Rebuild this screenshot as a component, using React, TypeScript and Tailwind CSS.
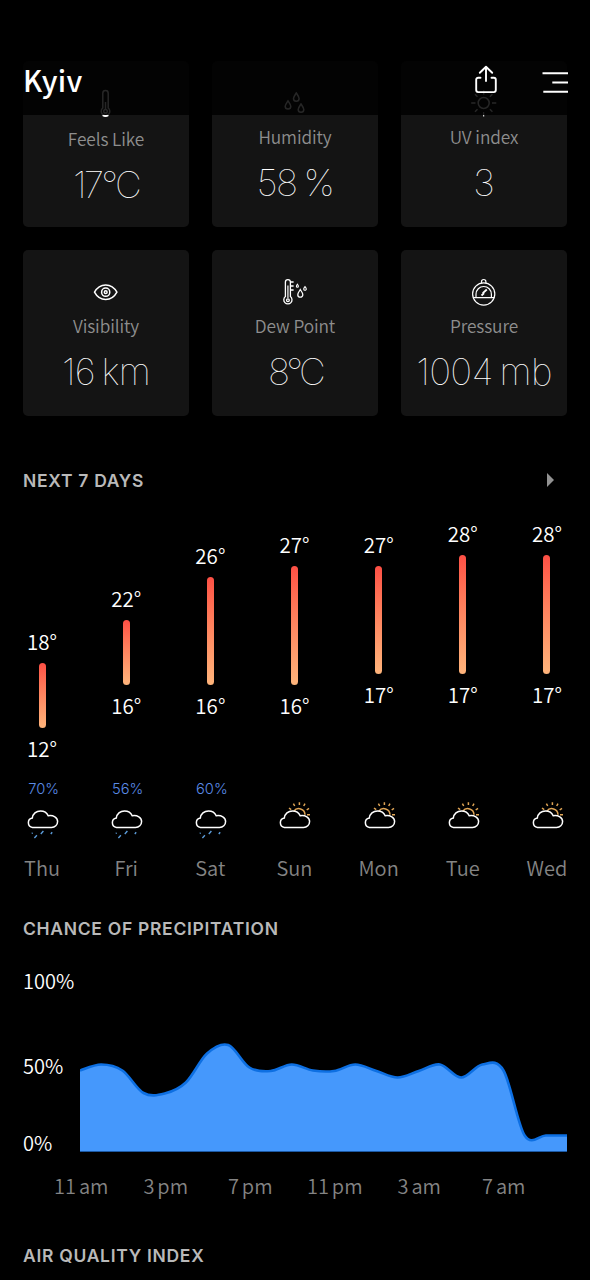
import * as React from "react";

const DEGREE = 10.83;
const MAX_TEMP = 28;

const days = [
  { day: "Thu", high: 18, low: 12, rain: "70%" },
  { day: "Fri", high: 22, low: 16, rain: "56%" },
  { day: "Sat", high: 26, low: 16, rain: "60%" },
  { day: "Sun", high: 27, low: 16 },
  { day: "Mon", high: 27, low: 17 },
  { day: "Tue", high: 28, low: 17 },
  { day: "Wed", high: 28, low: 17 },
];

// height in px above the 0% line, one value per hour
const precipitation = [
  81, 87, 81, 58.5, 58, 69, 98, 106.5, 84, 80.5, 87, 81, 80.5, 87, 80.5, 74, 80.5,
  87, 74, 87, 81, 16, 16, 16,
];

const hours = ["11 am", "3 pm", "7 pm", "11 pm", "3 am", "7 am"];

function ThermometerIcon() {
  return (
    <svg width="28" height="30" viewBox="0 0 28 30" fill="none" stroke="currentColor" strokeWidth="1.5">
      <path d="M10.8 19V4.200a2.700 2.700 0 0 1 5.400 0V19a4.300 4.300 0 1 1-5.400 0z" />
      <path d="M13.500 13v7" />
      <circle cx="13.500" cy="22.300" r="1.800" />
      <path d="M10.800 26.200c1.500 1 3.900 1 5.400 0" strokeWidth="1.800" />
    </svg>
  );
}

function DropsIcon() {
  return (
    <svg width="28" height="28" viewBox="0 0 28 28" fill="none" stroke="currentColor" strokeWidth="1.5">
      <path d="M7 11.800c1.600 2.400 2.800 4 2.800 5.500a2.800 2.800 0 0 1-5.600 0c0-1.500 1.200-3.100 2.800-5.500z" />
      <path d="M15.300 4c1.600 2.400 2.800 4 2.800 5.500a2.800 2.800 0 0 1-5.600 0c0-1.500 1.200-3.100 2.800-5.500z" />
      <path d="M20 15c1.600 2.400 2.800 4 2.800 5.500a2.800 2.800 0 0 1-5.600 0c0-1.500 1.200-3.100 2.800-5.500z" />
    </svg>
  );
}

function SunIcon() {
  return (
    <svg width="28" height="28" viewBox="0 0 28 28" fill="none" stroke="currentColor" strokeWidth="1.5">
      <circle cx="13.700" cy="14" r="5.500" />
      <path d="M13.700 1.500v4M1.200 14h4.300M22 14h4.300M5 5.300l2.500 2.500M19.900 20.200l2.500 2.500M5 22.700l2.500-2.500M19.900 7.800l2.500-2.500" />
      <path d="M13.700 23v4.500" strokeWidth="1" />
    </svg>
  );
}

function EyeIcon() {
  return (
    <svg width="28" height="28" viewBox="0 0 28 28" fill="none" stroke="currentColor" strokeWidth="1.5">
      <path d="M2.500 14.200C5 9.500 9 6.900 13.700 6.900s8.700 2.600 11.200 7.300c-2.500 4.700-6.500 7.300-11.200 7.300S5 18.900 2.500 14.200z" />
      <circle cx="13.700" cy="14.200" r="4.100" />
      <circle cx="13.700" cy="14.200" r="1.400" />
    </svg>
  );
}

function DewPointIcon() {
  return (
    <svg width="28" height="28" viewBox="0 0 28 28" fill="none" stroke="currentColor" strokeWidth="1.300">
      <path d="M4.400 18.600V4.100a2.500 2.500 0 0 1 5 0v14.500a4.100 4.100 0 1 1-5 0z" />
      <path d="M6.900 7.500V20" strokeWidth="1.500" opacity=".8" />
      <circle cx="6.900" cy="22.200" r="1.400" />
      <path d="M9.400 4h3.200M9.400 8h3.200M9.400 12h3.200" />
      <path d="M19.300 11.500c1.500 2.200 2.500 3.700 2.500 5.200a2.500 2.500 0 0 1-5 0c0-1.500 1-3 2.500-5.200z" />
      <path d="M16.400 6.300c.7 1 1 1.500 1 2a1 1 0 0 1-2 0c0-.5.3-1 1-2z" strokeWidth="1.100" />
      <path d="M24 8.600c.9 1.200 1.300 1.800 1.300 2.400a1.300 1.300 0 0 1-2.600 0c0-.6.4-1.200 1.300-2.400z" strokeWidth="1.100" />
    </svg>
  );
}

function PressureIcon() {
  return (
    <svg width="28" height="28" viewBox="0 0 28 28" fill="none" stroke="currentColor" strokeWidth="1.200">
      <circle cx="13.700" cy="16" r="11.100" />
      <path d="M11.500 4.900V3.700a2.200 2.200 0 0 1 4.400 0v1.200" />
      <path d="M2.900 19.600h21.600M6 19.500v-3.300a7.700 7.700 0 0 1 15.400 0v3.300" />
      <path d="M11.500 17.500l2-1.700-.3-1 3.600-3.300" strokeWidth="1.800" />
    </svg>
  );
}

function ShareIcon() {
  return (
    <svg width="24" height="30" viewBox="0 0 24 30" fill="none" stroke="currentColor" strokeWidth="1.900" strokeLinecap="round" strokeLinejoin="round">
      <path d="M6.500 12.700H4.200A2 2 0 0 0 2.200 14.700v10.400A2 2 0 0 0 4.200 27.100h15.600a2 2 0 0 0 2-2V14.700a2 2 0 0 0-2-2h-2.300" />
      <path d="M12 16V2M5.800 7.800L12 1.800l6.200 6" />
    </svg>
  );
}

function MenuIcon() {
  return (
    <svg width="26" height="22" viewBox="0 0 26 22" fill="none" stroke="currentColor" strokeWidth="2">
      <path d="M.5 2.200H26M10.300 11.500H26M1.300 20.700H26" />
    </svg>
  );
}

function WeatherIcon({ rainy }: { rainy: boolean }) {
  return (
    <svg width="40" height="42" viewBox="0 0 40 42" fill="none">
      {!rainy && (
        <path
          d="M19.800 11.200a6.200 6.200 0 0 1 11.200 3.500M15 8l2.200 1.700M19.400 3.700l1.300 2.300M25.400 2.200V5M31 3.700L29.700 6M35 8.300L32.700 10M36 14.700h-3"
          stroke="#e0a555"
          strokeWidth="1.500"
        />
      )}
      <path
        d="M10.500 27.400a4.700 4.700 0 0 1-.2-9.300c.4-4.200 4-7.200 8.200-7.200 3.500 0 6.500 1.900 7.700 4.800 5.200-.8 9.400 1.800 9.400 5.800 0 3.400-2.700 5.900-6.100 5.900z"
        fill="black"
        stroke="white"
        strokeWidth="1.500"
      />
      {rainy && (
        <path
          d="M9.800 33.500l.8-.6M18.800 34l2.600-3M12.400 38l2.500-2.700M28.800 34l1.400-1.800"
          stroke="#5b9bd8"
          strokeWidth="1.400"
        />
      )}
    </svg>
  );
}

function StatCard({
  icon,
  label,
  value,
  valueClass,
}: {
  icon: React.ReactNode;
  label: string;
  value: string;
  valueClass: string;
}) {
  return (
    <div className="flex h-[166px] flex-col items-center rounded-[5px] bg-[#141414] pt-7">
      {icon}
      <div className="mt-2 text-[17.3px] leading-6 font-[350] tracking-[-0.1px] text-[#8e8e8e]">{label}</div>
      <div className={`mt-[12px] font-[Inter,sans-serif] text-[37px] leading-[44px] font-thin whitespace-nowrap text-white ${valueClass}`}>
        {value}
      </div>
    </div>
  );
}

function SectionTitle({ children }: { children: React.ReactNode }) {
  return (
    <h2 className="font-[Inter,sans-serif] text-[17.5px] leading-6 font-semibold tracking-[0.7px] text-[#b9b9b9]">
      {children}
    </h2>
  );
}

function DayColumn({
  day,
  high,
  low,
  rain,
}: {
  day: string;
  high: number;
  low: number;
  rain?: string;
}) {
  return (
    <div className="flex flex-col items-center">
      <div
        className="flex h-[286px] flex-col items-center text-[20.5px] leading-6 font-[350] text-white"
        style={{ paddingTop: 28 + (MAX_TEMP - high) * DEGREE }}
      >
        <span>{high}°</span>
        <div
          className="mt-[10px] mb-[8px] w-[7px] shrink-0 rounded-full bg-linear-to-b from-[#fd4f45] to-[#feb47b]"
          style={{ height: (high - low) * DEGREE }}
        />
        <span>{low}°</span>
      </div>
      <div className="h-5 pl-[3px] font-[Inter,sans-serif] text-[14.7px] leading-5 font-light text-[#5a8be6]">
        {rain}
      </div>
      <div className="h-[57px] pt-px">
        <WeatherIcon rainy={!!rain} />
      </div>
      <div className="text-[20px] leading-6 font-[350] text-[#848484]">{day}</div>
    </div>
  );
}

function PrecipitationChart() {
  const width = 487;
  const base = 182.5;
  const step = width / (precipitation.length - 1);
  const points = precipitation.map((p, i) => [i * step, base - p]);

  let line = `M${points[0][0]} ${points[0][1]}`;
  for (let i = 0; i < points.length - 1; i++) {
    const before = points[Math.max(i - 1, 0)];
    const from = points[i];
    const to = points[i + 1];
    const after = points[Math.min(i + 2, points.length - 1)];
    line += `C${from[0] + (to[0] - before[0]) / 6} ${from[1] + (to[1] - before[1]) / 6} ${
      to[0] - (after[0] - from[0]) / 6
    } ${to[1] - (after[1] - from[1]) / 6} ${to[0]} ${to[1]}`;
  }

  return (
    <svg width={width} height="186" viewBox={`0 0 ${width} 186`}>
      <path d={`${line}V${base}H0Z`} fill="#4598fc" />
      <path d={line} fill="none" stroke="#0d6fe2" strokeWidth="2.600" />
      <path d={`M0 ${base}H${width}`} stroke="#1a5dad" strokeWidth=".8" />
    </svg>
  );
}

export default function App() {
  return (
    <div className="relative h-[1280px] w-[590px] overflow-hidden bg-black font-['Noto_Sans_CJK_SC',sans-serif] antialiased">
      <header className="absolute inset-x-0 top-0 z-10 flex h-[115px] items-start bg-black/85 pr-[22px] pl-[23px] text-white">
        <h1 className="mt-[59px] text-[29px] leading-10 font-medium tracking-[0.3px]">Kyiv</h1>
        <button type="button" className="mt-[65px] ml-auto" aria-label="Share">
          <ShareIcon />
        </button>
        <button type="button" className="mt-[71px] ml-[44px]" aria-label="Menu">
          <MenuIcon />
        </button>
      </header>

      <section className="grid grid-cols-3 gap-[23px] px-[23px] pt-[61px] pb-[53px] text-white">
        <StatCard icon={<ThermometerIcon />} label="Feels Like" value="17°C" valueClass="tracking-[-2.7px]" />
        <StatCard icon={<DropsIcon />} label="Humidity" value="58 %" valueClass="tracking-[-1.5px] [word-spacing:-2px]" />
        <StatCard icon={<SunIcon />} label="UV index" value="3" valueClass="tracking-normal" />
        <StatCard icon={<EyeIcon />} label="Visibility" value="16 km" valueClass="tracking-[-0.8px] [word-spacing:-3px]" />
        <StatCard icon={<DewPointIcon />} label="Dew Point" value="8°C" valueClass="tracking-[-3.7px]" />
        <StatCard icon={<PressureIcon />} label="Pressure" value="1004 mb" valueClass="tracking-[-0.7px] [word-spacing:-3px]" />
      </section>

      <section>
        <div className="flex items-center justify-between pr-9 pl-[23px]">
          <SectionTitle>NEXT 7 DAYS</SectionTitle>
          <svg className="-mt-[3px]" width="7" height="14" viewBox="0 0 7 14" fill="#929292">
            <path d="M0 0l7 7-7 7z" />
          </svg>
        </div>
        <div className="grid w-[589px] grid-cols-7">
          {days.map((d) => (
            <DayColumn key={d.day} {...d} />
          ))}
        </div>
      </section>

      <section className="mt-[37px]">
        <div className="px-[23px]">
          <SectionTitle>CHANCE OF PRECIPITATION</SectionTitle>
          <div className="mt-7 flex h-[186px]">
            <div className="flex w-[57px] flex-col text-[20px] leading-6 font-[350] text-white">
              <span>100%</span>
              <span className="mt-[61px]">50%</span>
              <span className="mt-[53px]">0%</span>
            </div>
            <PrecipitationChart />
          </div>
        </div>
        <div className="mt-[19px] ml-[39px] grid w-[507px] grid-cols-6 text-center text-[20px] leading-6 font-[350] text-[#848484] [word-spacing:-1.5px]">
          {hours.map((hour) => (
            <span key={hour}>{hour}</span>
          ))}
        </div>
      </section>

      <section className="mt-[46px] px-[23px]">
        <SectionTitle>AIR QUALITY INDEX</SectionTitle>
      </section>
    </div>
  );
}
